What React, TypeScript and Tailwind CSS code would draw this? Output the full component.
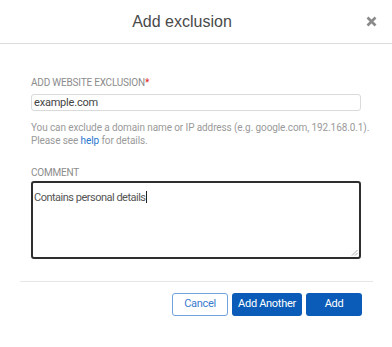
import React from "react";

export default function App() {
  return (
    <div className="w-[392px] h-[347px] bg-white overflow-hidden" style={{ fontFamily: "Roboto, 'Liberation Sans', sans-serif" }}>
      <div className="relative h-[44px] border-b border-[#dcdcdc] flex items-center justify-center pr-[28px]">
        <span className="text-[16px] text-[#4a4a4a] leading-none" style={{ fontFamily: "'Liberation Sans', Arial, sans-serif" }}>Add exclusion</span>
        <svg className="absolute left-[366px] top-[16px]" width="11" height="11" viewBox="0 0 11 11">
          <path d="M1.5 1.5 L9.5 9.5 M9.5 1.5 L1.5 9.5" stroke="#8a8a8a" strokeWidth="2.6" strokeLinecap="butt" />
        </svg>
      </div>
      <div className="pl-[31px] pr-[31px] pt-[33px]">
        <div className="text-[10px] leading-[12px] text-[#8c8c8c] tracking-[-0.2px] uppercase">
          Add website exclusion<span className="text-[#e02424]">*</span>
        </div>
        <div className="mt-[5px] h-[17px] w-[330px] border border-[#dadada] rounded-[3px] flex items-center px-[2px]">
          <span className="text-[11px] text-[#444] tracking-[-0.2px] leading-none">example.com</span>
        </div>
        <p className="mt-[10px] text-[10px] leading-[13px] text-[#9a9a9a] whitespace-nowrap tracking-[-0.1px]">
          You can exclude a domain name or IP address (e.g. google.com, 192.168.0.1).
          <br />
          Please see <span className="text-[#2a78cf]">help</span> for details.
        </p>
        <div className="mt-[20px] text-[10px] leading-[12px] text-[#8c8c8c] tracking-[-0.2px] uppercase">Comment</div>
        <div className="relative mt-[2px] h-[78px] w-[330px] border-2 border-[#2e2e2e] rounded-[3px] px-[1px] pt-[1px]">
          <span className="text-[11px] leading-[13px] text-[#555] tracking-[-0.5px]">Contains personal details</span>
          <span className="inline-block w-px h-[12px] bg-[#222] align-middle" />
          <svg className="absolute right-[1px] bottom-[1px]" width="7" height="7" viewBox="0 0 7 7">
            <path d="M6.5 1 L1 6.5 M6.5 4 L4 6.5" stroke="#9a9a9a" strokeWidth="0.8" />
          </svg>
        </div>
      </div>
      <div className="mt-[22px] mx-[20px] w-[353px] border-t border-[#e6e6e6]" />
      <div className="mt-[11px] pl-[172px] flex gap-[4px]">
        <button className="w-[56px] h-[23px] border border-[#6ea3dd] rounded-[3px] text-[11px] tracking-[-0.3px] text-[#3a7ccf] bg-white">Cancel</button>
        <button className="w-[70px] h-[23px] rounded-[3px] text-[11px] tracking-[-0.3px] text-white bg-[#0a5cb8]">Add Another</button>
        <button className="w-[56px] h-[23px] rounded-[3px] text-[11px] tracking-[-0.3px] text-white bg-[#0a5cb8]">Add</button>
      </div>
    </div>
  );
}
